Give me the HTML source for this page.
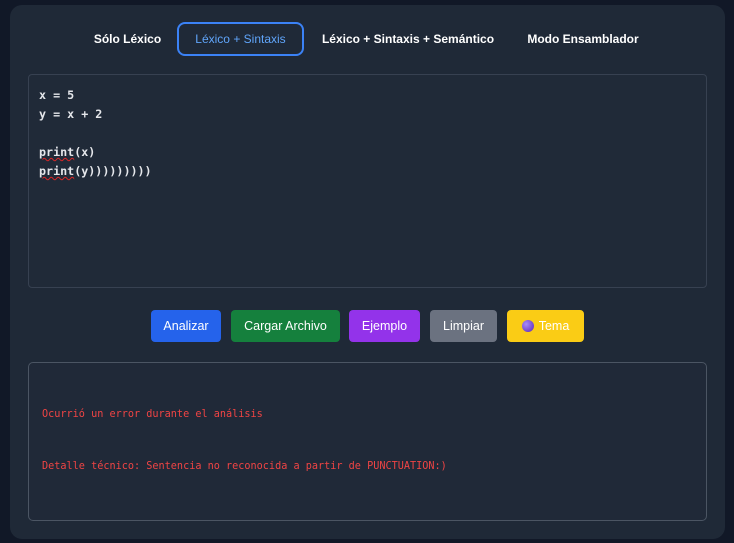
<!DOCTYPE html>
<html><head><meta charset="utf-8"><style>
body{margin:0;width:734px;height:543px;background:#111827;overflow:hidden;font-family:"Liberation Sans","DejaVu Sans",sans-serif;position:relative}
.panel{position:absolute;left:10px;top:5px;width:715px;height:534px;background:#1f2937;border-radius:12px}
.tab{position:absolute;top:22px;height:34px;line-height:34px;color:#fff;font-weight:bold;font-size:12px;text-align:center}
.act{border:2px solid #3b82f6;border-radius:8px;color:#60a5fa;font-weight:normal;box-sizing:border-box;line-height:30px}
.ed{position:absolute;left:28px;top:74px;width:677px;height:212px;border:1px solid #374151;border-radius:4px;background:#202a38}
.code{position:absolute;left:39px;top:86px;font-family:"DejaVu Sans Mono","Liberation Mono",monospace;font-size:11.7px;font-weight:bold;color:#e5e7eb;line-height:19px;white-space:pre}
.sq{text-decoration:underline wavy #dc2626;text-decoration-thickness:1px}
.btn{position:absolute;top:310px;height:32px;line-height:32px;border-radius:4px;color:#fff;font-size:12.5px;text-align:center}
.out{position:absolute;left:28px;top:362px;width:677px;height:157px;border:1px solid #4b5563;border-radius:5px;background:#202938}
.err{position:absolute;left:42px;font-family:"DejaVu Sans Mono","Liberation Mono",monospace;font-size:10.2px;color:#ef4444}
</style></head><body>
<div class="panel"></div>
<div class="tab" style="left:85px;width:85px">Sólo Léxico</div>
<div class="tab act" style="left:177px;width:127px">Léxico + Sintaxis</div>
<div class="tab" style="left:312px;width:192px">Léxico + Sintaxis + Semántico</div>
<div class="tab" style="left:518px;width:130px">Modo Ensamblador</div>
<div class="ed"></div>
<div class="code">x = 5
y = x + 2

<span class="sq">print</span>(x)
<span class="sq">print</span>(y)))))))))</div>
<div class="btn" style="left:151px;width:70px;background:#2563eb">Analizar</div>
<div class="btn" style="left:231px;width:109px;background:#15803d">Cargar Archivo</div>
<div class="btn" style="left:349px;width:71px;background:#9333ea">Ejemplo</div>
<div class="btn" style="left:430px;width:67px;background:#6b7280">Limpiar</div>
<div class="btn" style="left:507px;width:77px;background:#facc15"><span style="display:inline-block;width:12px;height:12px;border-radius:50%;background:radial-gradient(circle at 35% 35%,#a78bfa,#5b21b6);vertical-align:-2px;margin-right:5px"></span>Tema</div>
<div class="out"></div>
<div class="err" style="top:409px">Ocurrió un error durante el análisis</div>
<div class="err" style="top:461px">Detalle técnico: Sentencia no reconocida a partir de PUNCTUATION:)</div>
</body></html>
